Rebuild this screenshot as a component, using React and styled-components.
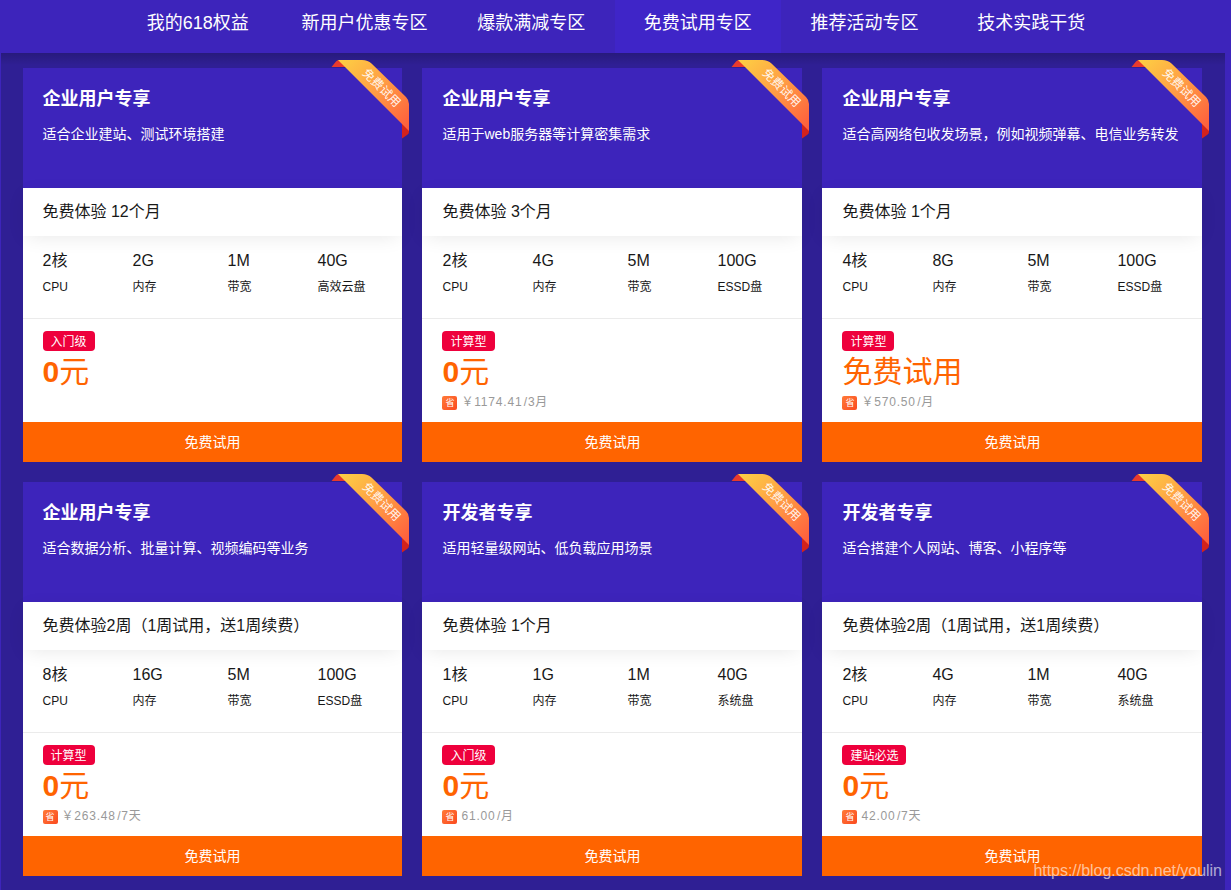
import React from "react";
import styled, { createGlobalStyle } from "styled-components";

const GlobalStyle = createGlobalStyle`
  * { box-sizing: border-box; }
  body {
    margin: 0;
    height: 890px;
    overflow: hidden;
    background: #3d24bb;
    font-family: "Liberation Sans", "Noto Sans CJK SC", sans-serif;
    color: #181818;
  }
`;

const Nav = styled.nav`
  height: 53px;
  padding-left: 114.5px;
  background: #3d24bb;
`;

const NavList = styled.div`
  display: flex;
  width: 1000px;
  height: 100%;
`;

const NavItem = styled.a`
  flex: 1;
  height: 100%;
  line-height: 47px;
  text-align: center;
  font-size: 18px;
  color: #fff;
  background: ${(p) => (p.$active ? "#3f25c8" : "transparent")};
`;

const Section = styled.section`
  margin: 0 6px 0 1px;
  height: 837px;
  padding: 15px 22.55px 0 21.5px;
  background: linear-gradient(rgba(0, 0, 0, 0.16), rgba(0, 0, 0, 0) 12px), #2f1f94;
`;

const Grid = styled.div`
  display: grid;
  grid-template-columns: repeat(3, 1fr);
  gap: 20px;
`;

const Card = styled.article`
  position: relative;
  height: 394px;
  background: #fff;
  display: flex;
  flex-direction: column;
`;

const CardHead = styled.header`
  height: 120px;
  padding: 18px 20px 0;
  background: #3d24bb;
  color: #fff;
`;

const Title = styled.h3`
  margin: 0;
  font-size: 18px;
  line-height: 26px;
  font-weight: 700;
`;

const Desc = styled.p`
  margin: 12px 0 0;
  font-size: 14px;
  line-height: 20px;
  white-space: nowrap;
`;

const Period = styled.div`
  position: relative;
  height: 48px;
  padding: 0 20px;
  line-height: 48px;
  font-size: 16px;
  background: #fff;
  box-shadow: 0 4px 20px -4px rgba(0, 0, 0, 0.1);
`;

const Specs = styled.dl`
  display: grid;
  grid-template-columns: 90px 95px 90px 1fr;
  height: 83px;
  margin: 0;
  padding: 13px 0 0 20px;
  border-bottom: 1px solid #ebebeb;
`;

const SpecValue = styled.dd`
  margin: 0;
  font-size: 16px;
  line-height: 24px;
`;

const SpecName = styled.dt`
  margin-top: 5px;
  font-size: 12px;
  line-height: 18px;
`;

const Offer = styled.div`
  height: 103px;
  padding: 12px 20px 0;
`;

const Tag = styled.span`
  display: block;
  width: fit-content;
  height: 20px;
  padding: 0 8px;
  border-radius: 4px;
  background: #ee003c;
  color: #fff;
  font-size: 12px;
  line-height: 22px;
`;

const Price = styled.div`
  height: 42px;
  line-height: 42px;
  font-size: 30px;
  color: #ff6400;
`;

const Saving = styled.div`
  display: flex;
  height: 18px;
  gap: 4px;
  color: #999;
  font-size: 12px;
  line-height: 18px;
  letter-spacing: 0.8px;
`;

const SaveMark = styled.i`
  width: 15px;
  height: 14px;
  margin-top: 3px;
  border-radius: 2px;
  background: linear-gradient(135deg, #ff7a38, #fb4a20);
  color: #fff;
  font-size: 9px;
  line-height: 14px;
  letter-spacing: 0;
  font-style: normal;
  text-align: center;
`;

const Unit = styled.span`
  margin-left: 1.4px;
`;

const TrialButton = styled.button`
  height: 40px;
  padding: 0;
  border: 0;
  background: #ff6400;
  color: #fff;
  font: 14px/40px "Liberation Sans", "Noto Sans CJK SC", sans-serif;
`;

const RibbonBox = styled.svg`
  position: absolute;
  top: -8px;
  right: -7px;
  width: 78px;
  height: 79px;
`;

const Watermark = styled.div`
  position: absolute;
  right: 9px;
  top: 861px;
  font-size: 16px;
  line-height: 20px;
  letter-spacing: -0.03px;
  color: rgba(255, 255, 255, 0.62);
`;

function Ribbon({ id }) {
  return (
    <RibbonBox viewBox="0 0 78 79">
      <defs>
        <linearGradient id={id} gradientUnits="userSpaceOnUse" x1="8" y1="0" x2="78" y2="70">
          <stop offset="0" stopColor="#fdd044" />
          <stop offset="0.5" stopColor="#ff9a44" />
          <stop offset="1" stopColor="#ff5a3c" />
        </linearGradient>
      </defs>
      <path d="M0.500 7 L5 1.5 Q6 0 8 0 L15 7 Z" fill="#e83a2c" />
      <path d="M71 63 L78 70 V72 Q78 74 76 75 L71 78.5 Z" fill="#d3221c" />
      <path d="M7 0 H31 Q37 0 40.500 3.500 L75 37 Q78 40 78 44 V71 Z" fill={`url(#${id})`} />
      <text x="50.500" y="32" transform="rotate(45 50.500 28)" textAnchor="middle" fontSize="12" fill="#fff" fillOpacity="0.92">
        免费试用
      </text>
    </RibbonBox>
  );
}

const navItems = ["我的618权益", "新用户优惠专区", "爆款满减专区", "免费试用专区", "推荐活动专区", "技术实践干货"];

const plans = [
  {
    title: "企业用户专享", desc: "适合企业建站、测试环境搭建", period: "免费体验 12个月",
    specs: [["2核", "CPU"], ["2G", "内存"], ["1M", "带宽"], ["40G", "高效云盘"]],
    tag: "入门级",
  },
  {
    title: "企业用户专享", desc: "适用于web服务器等计算密集需求", period: "免费体验 3个月",
    specs: [["2核", "CPU"], ["4G", "内存"], ["5M", "带宽"], ["100G", "ESSD盘"]],
    tag: "计算型", saving: ["￥1174.41", "/3月"],
  },
  {
    title: "企业用户专享", desc: "适合高网络包收发场景，例如视频弹幕、电信业务转发", period: "免费体验 1个月",
    specs: [["4核", "CPU"], ["8G", "内存"], ["5M", "带宽"], ["100G", "ESSD盘"]],
    tag: "计算型", price: "免费试用", saving: ["￥570.50", "/月"],
  },
  {
    title: "企业用户专享", desc: "适合数据分析、批量计算、视频编码等业务", period: "免费体验2周（1周试用，送1周续费）",
    specs: [["8核", "CPU"], ["16G", "内存"], ["5M", "带宽"], ["100G", "ESSD盘"]],
    tag: "计算型", saving: ["￥263.48", "/7天"],
  },
  {
    title: "开发者专享", desc: "适用轻量级网站、低负载应用场景", period: "免费体验 1个月",
    specs: [["1核", "CPU"], ["1G", "内存"], ["1M", "带宽"], ["40G", "系统盘"]],
    tag: "入门级", saving: ["61.00", "/月"],
  },
  {
    title: "开发者专享", desc: "适合搭建个人网站、博客、小程序等", period: "免费体验2周（1周试用，送1周续费）",
    specs: [["2核", "CPU"], ["4G", "内存"], ["1M", "带宽"], ["40G", "系统盘"]],
    tag: "建站必选", saving: ["42.00", "/7天"],
  },
];

function PlanCard({ plan, index }) {
  return (
    <Card>
      <CardHead>
        <Title>{plan.title}</Title>
        <Desc>{plan.desc}</Desc>
      </CardHead>
      <Period>{plan.period}</Period>
      <Specs>
        {plan.specs.map(([value, name]) => (
          <div key={name}>
            <SpecValue>{value}</SpecValue>
            <SpecName>{name}</SpecName>
          </div>
        ))}
      </Specs>
      <Offer>
        <Tag>{plan.tag}</Tag>
        <Price>{plan.price || <><b>0</b>元</>}</Price>
        {plan.saving && (
          <Saving>
            <SaveMark>省</SaveMark>
            <span>{plan.saving[0]}<Unit>{plan.saving[1]}</Unit></span>
          </Saving>
        )}
      </Offer>
      <TrialButton>免费试用</TrialButton>
      <Ribbon id={`ribbon-${index}`} />
    </Card>
  );
}

export default function App() {
  return (
    <>
      <GlobalStyle />
      <Nav>
        <NavList>
          {navItems.map((item) => (
            <NavItem key={item} $active={item === "免费试用专区"}>{item}</NavItem>
          ))}
        </NavList>
      </Nav>
      <Section>
        <Grid>
          {plans.map((plan, i) => (
            <PlanCard key={i} plan={plan} index={i} />
          ))}
        </Grid>
      </Section>
      <Watermark>https://blog.csdn.net/youlin</Watermark>
    </>
  );
}
